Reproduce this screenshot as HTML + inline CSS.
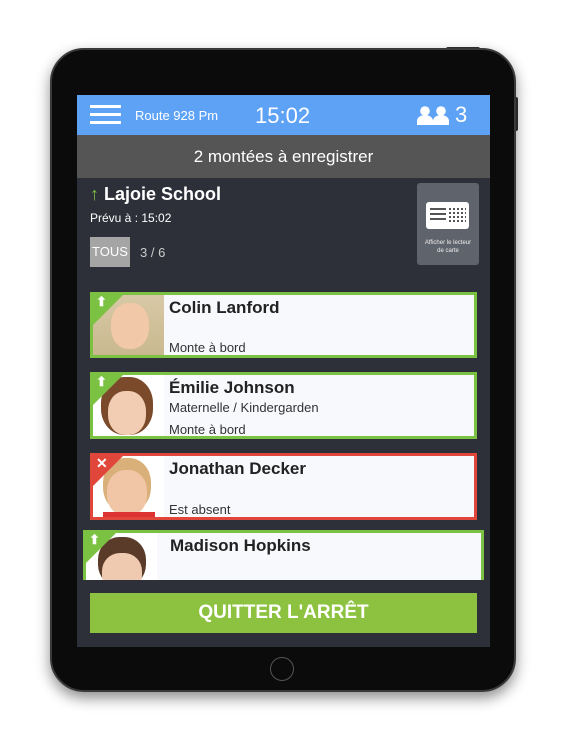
<!DOCTYPE html>
<html><head><meta charset="utf-8"><style>
body{margin:0;width:572px;height:750px;background:#fff;position:relative;overflow:hidden;font-family:"Liberation Sans",sans-serif}
.ipad{position:absolute;left:50px;top:48px;width:466px;height:644px;background:#0b0b0b;border-radius:34px;box-shadow:0 6px 14px rgba(0,0,0,.45);border:2px solid #3a3a3a;box-sizing:border-box}
.btn1{position:absolute;left:446px;top:47px;width:34px;height:4px;background:#333;border-radius:2px}
.btn2{position:absolute;left:514px;top:97px;width:4px;height:34px;background:#333;border-radius:2px}
.home{position:absolute;left:270px;top:657px;width:22px;height:22px;border:1.5px solid #555;border-radius:50%}
.screen{position:absolute;left:77px;top:95px;width:413px;height:552px;background:#2e3039;overflow:hidden}
.top{position:absolute;left:0;top:0;width:413px;height:40px;background:#5ea2f6;color:#fff}
.gray{position:absolute;left:0;top:40px;width:413px;height:43px;background:#555;color:#fff;font-size:17px;text-align:center;line-height:43px}
.card{position:absolute;left:13px;width:387px;background:#f8f9fd;border:3px solid #7cc242;box-sizing:border-box;overflow:hidden}
.card .ph{position:absolute;left:0;top:0;width:71px;height:100%;background:#fff}
.card .name{position:absolute;left:76px;top:3px;font-size:17px;font-weight:bold;color:#222}
.card .sub{position:absolute;left:76px;font-size:13px;color:#333}
.tri{position:absolute;left:0;top:0;width:0;height:0;border-top:30px solid #7cc242;border-right:30px solid transparent}
.ic{position:absolute;left:3px;top:-1px;color:#fff;font-size:13px;font-weight:bold}
</style></head><body>
<div class="btn1"></div><div class="btn2"></div>
<div class="ipad"></div>
<div class="home"></div>
<div class="screen">
 <div class="top">
  <div style="position:absolute;left:13px;top:10px;width:31px;height:3px;background:#fff;box-shadow:0 8px 0 #fff,0 16px 0 #fff"></div>
  <div style="position:absolute;left:58px;top:13px;font-size:13px">Route 928 Pm</div>
  <div style="position:absolute;left:178px;top:8px;font-size:22px">15:02</div>
  <svg style="position:absolute;left:340px;top:11px" width="32" height="19" viewBox="0 0 32 19"><circle cx="8" cy="5" r="4.8" fill="#fff"/><path d="M0 19v-4a8 6 0 0 1 16 0v4z" fill="#fff"/><circle cx="24" cy="5" r="4.8" fill="#fff"/><path d="M16 19v-4a8 6 0 0 1 16 0v4z" fill="#fff"/></svg>
  <div style="position:absolute;left:378px;top:7px;font-size:22px">3</div>
 </div>
 <div class="gray">2 montées à enregistrer</div>
 <div style="position:absolute;left:13px;top:89px;font-size:18px;font-weight:bold;color:#fff"><span style="color:#7cc242;font-weight:normal">↑</span> Lajoie School</div>
 <div style="position:absolute;left:13px;top:116px;font-size:12px;color:#fff">Prévu à : 15:02</div>
 <div style="position:absolute;left:13px;top:142px;width:40px;height:30px;background:#a5a5a5;color:#fff;font-size:13px;line-height:30px;text-align:center">TOUS</div>
 <div style="position:absolute;left:63px;top:150px;font-size:13px;color:#ccc">3 / 6</div>
 <div style="position:absolute;left:340px;top:88px;width:62px;height:82px;background:#5f636c;border-radius:3px">
  <div style="position:absolute;left:9px;top:19px;width:43px;height:27px;background:#fff;border-radius:3px">
   <div style="position:absolute;left:4px;top:6px;width:16px;height:2px;background:#555;box-shadow:0 5px 0 #555,0 10px 0 #555"></div>
   <div style="position:absolute;left:23px;top:4px;width:17px;height:18px;background:repeating-linear-gradient(0deg,#fff 0 2px,transparent 2px 4px),repeating-linear-gradient(90deg,#555 0 2px,#fff 2px 4px)"></div>
  </div>
  <div style="position:absolute;left:0;top:56px;width:62px;text-align:center;color:#eee;font-size:6px;line-height:8px">Afficher le lecteur<br>de carte</div>
 </div>
 <div class="card" style="top:197px;height:66px"><div class="ph" style="background:linear-gradient(#d8c9a6,#c9b88f)"><div style="position:absolute;left:18px;top:8px;width:38px;height:46px;border-radius:45%;background:#f1c9a8"></div></div><div class="tri"></div><div class="ic">⬆</div><div class="name">Colin Lanford</div><div class="sub" style="top:45px">Monte à bord</div></div>
 <div class="card" style="top:277px;height:67px"><div class="ph"><div style="position:absolute;left:8px;top:2px;width:52px;height:58px;border-radius:45%;background:#7a4a2a"></div><div style="position:absolute;left:15px;top:16px;width:38px;height:44px;border-radius:45%;background:#f2cdb3"></div></div><div class="tri"></div><div class="ic">⬆</div><div class="name">Émilie Johnson</div><div class="sub" style="top:25px">Maternelle / Kindergarden</div><div class="sub" style="top:47px">Monte à bord</div></div>
 <div class="card" style="top:358px;height:67px;border-color:#e0473a"><div class="ph"><div style="position:absolute;left:10px;top:2px;width:48px;height:54px;border-radius:45%;background:#d9b07a"></div><div style="position:absolute;left:14px;top:14px;width:40px;height:46px;border-radius:45%;background:#f0c6a6"></div><div style="position:absolute;left:10px;top:56px;width:52px;height:10px;background:#d33"></div></div><div class="tri" style="border-top-color:#e0473a"></div><div class="ic" style="font-size:14px">✕</div><div class="name">Jonathan Decker</div><div class="sub" style="top:46px">Est absent</div></div>
 <div class="card" style="top:435px;left:6px;width:401px;height:50px;border-bottom:none"><div class="ph"><div style="position:absolute;left:12px;top:4px;width:48px;height:50px;border-radius:45%;background:#5a3a28"></div><div style="position:absolute;left:16px;top:20px;width:40px;height:40px;border-radius:45%;background:#f0cab0"></div></div><div class="tri"></div><div class="ic">⬆</div><div class="name" style="left:84px">Madison Hopkins</div></div>
 <div style="position:absolute;left:13px;top:498px;width:387px;height:40px;background:#8cc23f;color:#fff;font-size:19px;font-weight:bold;text-align:center;line-height:40px">QUITTER L'ARRÊT</div>
</div>
</body></html>
